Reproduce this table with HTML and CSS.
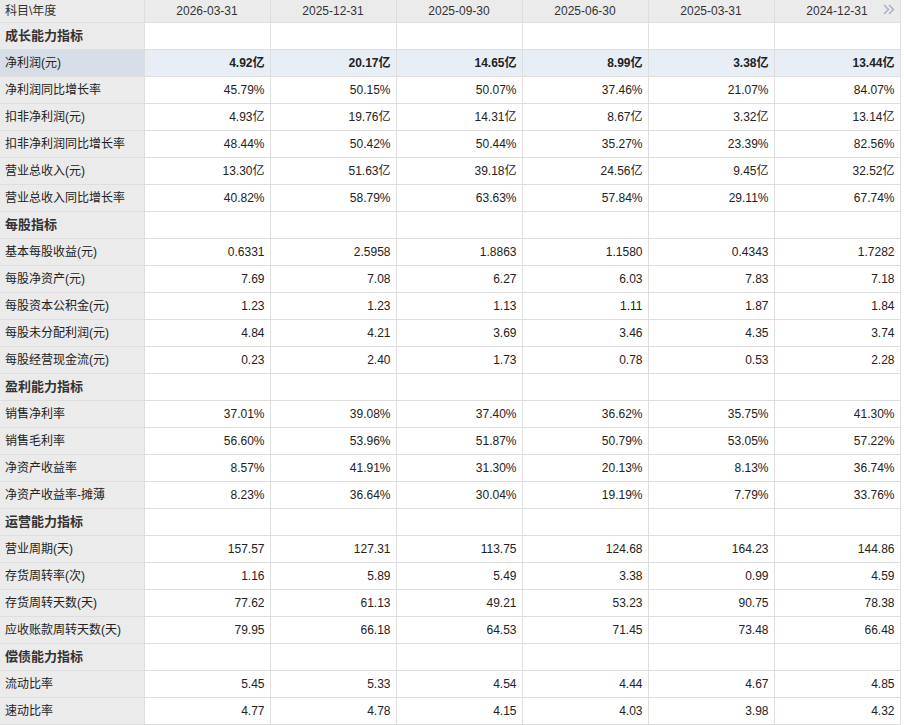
FILE: index.html
```html
<!DOCTYPE html>
<html lang="zh-CN">
<head>
<meta charset="utf-8">
<title>主要指标</title>
<link rel="stylesheet" href="styles.css">
</head>
<body>
<table class="fin">
<colgroup>
<col class="c-name"><col class="c-val"><col class="c-val"><col class="c-val"><col class="c-val"><col class="c-val"><col class="c-val">
</colgroup>
<thead>
<tr class="head">
<th class="name">科目\年度</th>
<th>2026-03-31</th>
<th>2025-12-31</th>
<th>2025-09-30</th>
<th>2025-06-30</th>
<th>2025-03-31</th>
<th class="last">2024-12-31<span class="more"><svg width="12" height="11" viewBox="0 0 12 11"><path d="M1 1 L5.5 5.5 L1 10 M6 1 L10.5 5.5 L6 10" fill="none" stroke="#a9b4c6" stroke-width="1.6"/></svg></span></th>
</tr>
</thead>
<tbody>
<tr class="sec"><td class="name">成长能力指标</td><td></td><td></td><td></td><td></td><td></td><td></td></tr>
<tr class="hl"><td class="name">净利润(元)</td><td>4.92亿</td><td>20.17亿</td><td>14.65亿</td><td>8.99亿</td><td>3.38亿</td><td>13.44亿</td></tr>
<tr><td class="name">净利润同比增长率</td><td>45.79%</td><td>50.15%</td><td>50.07%</td><td>37.46%</td><td>21.07%</td><td>84.07%</td></tr>
<tr><td class="name">扣非净利润(元)</td><td>4.93亿</td><td>19.76亿</td><td>14.31亿</td><td>8.67亿</td><td>3.32亿</td><td>13.14亿</td></tr>
<tr><td class="name">扣非净利润同比增长率</td><td>48.44%</td><td>50.42%</td><td>50.44%</td><td>35.27%</td><td>23.39%</td><td>82.56%</td></tr>
<tr><td class="name">营业总收入(元)</td><td>13.30亿</td><td>51.63亿</td><td>39.18亿</td><td>24.56亿</td><td>9.45亿</td><td>32.52亿</td></tr>
<tr><td class="name">营业总收入同比增长率</td><td>40.82%</td><td>58.79%</td><td>63.63%</td><td>57.84%</td><td>29.11%</td><td>67.74%</td></tr>
<tr class="sec"><td class="name">每股指标</td><td></td><td></td><td></td><td></td><td></td><td></td></tr>
<tr><td class="name">基本每股收益(元)</td><td>0.6331</td><td>2.5958</td><td>1.8863</td><td>1.1580</td><td>0.4343</td><td>1.7282</td></tr>
<tr><td class="name">每股净资产(元)</td><td>7.69</td><td>7.08</td><td>6.27</td><td>6.03</td><td>7.83</td><td>7.18</td></tr>
<tr><td class="name">每股资本公积金(元)</td><td>1.23</td><td>1.23</td><td>1.13</td><td>1.11</td><td>1.87</td><td>1.84</td></tr>
<tr><td class="name">每股未分配利润(元)</td><td>4.84</td><td>4.21</td><td>3.69</td><td>3.46</td><td>4.35</td><td>3.74</td></tr>
<tr><td class="name">每股经营现金流(元)</td><td>0.23</td><td>2.40</td><td>1.73</td><td>0.78</td><td>0.53</td><td>2.28</td></tr>
<tr class="sec"><td class="name">盈利能力指标</td><td></td><td></td><td></td><td></td><td></td><td></td></tr>
<tr><td class="name">销售净利率</td><td>37.01%</td><td>39.08%</td><td>37.40%</td><td>36.62%</td><td>35.75%</td><td>41.30%</td></tr>
<tr><td class="name">销售毛利率</td><td>56.60%</td><td>53.96%</td><td>51.87%</td><td>50.79%</td><td>53.05%</td><td>57.22%</td></tr>
<tr><td class="name">净资产收益率</td><td>8.57%</td><td>41.91%</td><td>31.30%</td><td>20.13%</td><td>8.13%</td><td>36.74%</td></tr>
<tr><td class="name">净资产收益率-摊薄</td><td>8.23%</td><td>36.64%</td><td>30.04%</td><td>19.19%</td><td>7.79%</td><td>33.76%</td></tr>
<tr class="sec"><td class="name">运营能力指标</td><td></td><td></td><td></td><td></td><td></td><td></td></tr>
<tr><td class="name">营业周期(天)</td><td>157.57</td><td>127.31</td><td>113.75</td><td>124.68</td><td>164.23</td><td>144.86</td></tr>
<tr><td class="name">存货周转率(次)</td><td>1.16</td><td>5.89</td><td>5.49</td><td>3.38</td><td>0.99</td><td>4.59</td></tr>
<tr><td class="name">存货周转天数(天)</td><td>77.62</td><td>61.13</td><td>49.21</td><td>53.23</td><td>90.75</td><td>78.38</td></tr>
<tr><td class="name">应收账款周转天数(天)</td><td>79.95</td><td>66.18</td><td>64.53</td><td>71.45</td><td>73.48</td><td>66.48</td></tr>
<tr class="sec"><td class="name">偿债能力指标</td><td></td><td></td><td></td><td></td><td></td><td></td></tr>
<tr><td class="name">流动比率</td><td>5.45</td><td>5.33</td><td>4.54</td><td>4.44</td><td>4.67</td><td>4.85</td></tr>
<tr><td class="name">速动比率</td><td>4.77</td><td>4.78</td><td>4.15</td><td>4.03</td><td>3.98</td><td>4.32</td></tr>
</tbody>
</table>
</body>
</html>
```
FILE: styles.css
```css
html, body {
  margin: 0;
  padding: 0;
  background: #ffffff;
}

.fin {
  border-collapse: collapse;
  table-layout: fixed;
  width: 900px;
  font-family: "Liberation Sans", Arial, "Noto Sans CJK SC", sans-serif;
  font-size: 12px;
  color: #222222;
}

.c-name { width: 144px; }
.c-val { width: 126px; }

.fin th,
.fin td {
  padding: 0 5px;
  border-right: 1px solid #dedede;
  border-bottom: 1px solid #dedede;
  white-space: nowrap;
  overflow: hidden;
}

.fin th {
  height: 22px;
  line-height: 22px;
  font-weight: normal;
  text-align: center;
  color: #333333;
  background: #ebebeb;
}

.fin th.name {
  text-align: left;
}

.fin th.last {
  position: relative;
}

.more {
  position: absolute;
  right: 5px;
  top: 4px;
  width: 12px;
  height: 11px;
  display: block;
}

.more svg {
  display: block;
}

.fin td {
  height: 26px;
  line-height: 26px;
  text-align: right;
}

.fin td.name {
  text-align: left;
  background: #ebebeb;
  color: #222222;
}

.sec td.name {
  font-weight: bold;
  font-size: 13px;
  color: #333333;
}

.hl td {
  background: #e8eef6;
  font-weight: bold;
}

.hl td.name {
  background: #d6dde6;
  font-weight: normal;
}
```
